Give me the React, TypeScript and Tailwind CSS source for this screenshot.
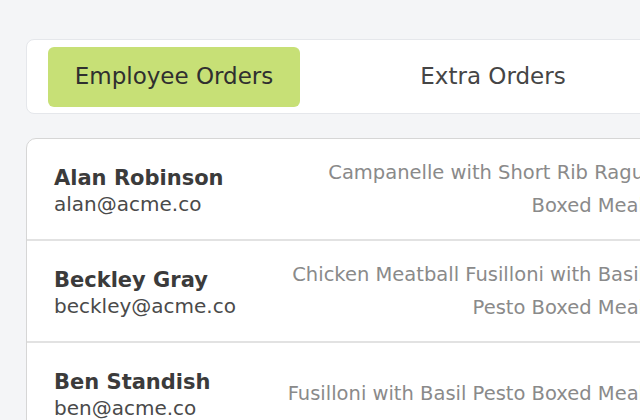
import React from "react";

const rows = [
  { name: "Alan Robinson", email: "alan@acme.co", lines: ["Campanelle with Short Rib Ragu", "Boxed Meal"] },
  { name: "Beckley Gray", email: "beckley@acme.co", lines: ["Chicken Meatball Fusilloni with Basil", "Pesto Boxed Meal"] },
  { name: "Ben Standish", email: "ben@acme.co", lines: ["Fusilloni with Basil Pesto Boxed Meal"] },
];

export default function App() {
  return (
    <div
      className="w-[640px] h-[420px] overflow-hidden bg-[#f4f5f7]"
      style={{ fontFamily: "'DejaVu Sans', 'Open Sans', sans-serif" }}
    >
      <div className="w-[760px] pl-[26px] pt-[39px]">
        <div className="h-[75px] rounded-lg border border-[#e5e7eb] bg-white px-[21px] py-[6px] flex items-center">
          <div className="w-[252px] h-[60px] rounded-md bg-[#c7e076] flex items-center justify-center text-[23px] text-[#2f2f2f]">
            Employee Orders
          </div>
          <div className="ml-[67px] w-[252px] h-[60px] flex items-center justify-center text-[23px] text-[#454545]">
            Extra Orders
          </div>
        </div>

        <div className="mt-[24px] rounded-[10px] border border-[#d6d6d6] bg-white">
          {rows.map((r, i) => (
            <div
              key={i}
              className="h-[102px] flex items-center border-b-2 border-[#e2e2e2] pl-[27px]"
            >
              <div className="flex flex-col pt-[2px]">
                <span className="text-[21px] leading-[27px] font-bold text-[#3b3b3b]">{r.name}</span>
                <span className="text-[20px] leading-[24px] text-[#4a4a4a]">{r.email}</span>
              </div>
              <div className="ml-auto w-[380px] mr-[115px] flex flex-col items-end text-right text-[19.5px] leading-[33px] text-[#8a8a8a]">
                {r.lines.map((l, j) => (
                  <span key={j} className="whitespace-nowrap">{l}</span>
                ))}
              </div>
            </div>
          ))}
        </div>
      </div>
    </div>
  );
}
